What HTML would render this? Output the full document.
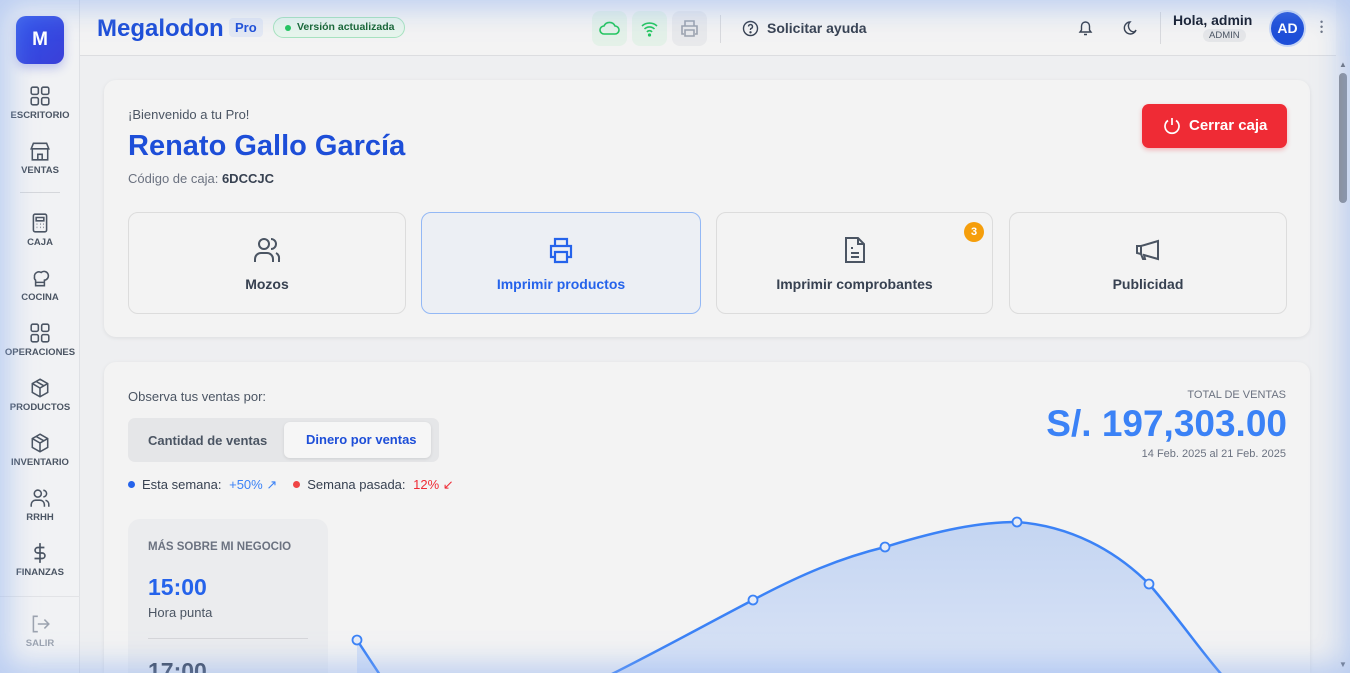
<!DOCTYPE html>
<html><head><meta charset="utf-8">
<style>
*{box-sizing:border-box;margin:0;padding:0}
html,body{width:1350px;height:673px;overflow:hidden}
body{background:#eeeff1;font-family:"Liberation Sans",sans-serif;position:relative;color:#374151}
.glow{position:absolute;left:0;top:0;width:1350px;height:673px;pointer-events:none;box-shadow:inset 0 0 28px 8px rgba(140,175,240,.55);z-index:50}
.side{position:absolute;left:0;top:0;width:80px;height:673px;background:#f1f2f4;border-right:1px solid #dfe1e5}
.logo{position:absolute;left:16px;top:16px;width:48px;height:48px;border-radius:10px;background:linear-gradient(135deg,#2f54eb,#3b3fd8);color:#fff;font-weight:bold;font-size:19px;display:flex;align-items:center;justify-content:center;box-shadow:0 4px 10px rgba(60,80,220,.3)}
.ni{position:absolute;left:0;width:80px;text-align:center;font-size:9.5px;font-weight:bold;color:#4b5563}
.ni svg{display:block;margin:0 auto 3px}
.hdr{position:absolute;left:80px;top:0;width:1256px;height:56px;background:#f3f3f3;border-bottom:1px solid #dcdde0}
.card{position:absolute;background:#f3f3f3;border-radius:12px;box-shadow:0 1px 4px rgba(0,0,0,.08)}
.tile{position:absolute;top:212px;height:102px;border:1px solid #dcdcdc;border-radius:10px;background:#f3f3f3;text-align:center;font-size:14px;font-weight:bold;color:#374151}
.tile svg{position:absolute;left:50%;top:22px;margin-left:-15px}
.tile span{position:absolute;left:0;right:0;top:63px}
</style></head><body>
<div class="side">
 <div class="logo">M</div>
 <div class="ni" style="top:85px"><svg width="22" height="22" viewBox="0 0 20 20" fill="none" stroke="#4b5563" stroke-width="1.4"><rect x="2" y="2" width="6.5" height="6.5" rx="1.5"/><rect x="11.5" y="2" width="6.5" height="6.5" rx="1.5"/><rect x="2" y="11.5" width="6.5" height="6.5" rx="1.5"/><rect x="11.5" y="11.5" width="6.5" height="6.5" rx="1.5"/></svg>ESCRITORIO</div>
 <div class="ni" style="top:140px"><svg width="22" height="22" viewBox="0 0 20 20" fill="none" stroke="#4b5563" stroke-width="1.4"><path d="M3 8V18H17V8M2 8L4 3H16L18 8Z M2 8h16M8 18v-5h4v5"/></svg>VENTAS</div>
 <div style="position:absolute;left:20px;top:192px;width:40px;border-top:1px solid #d5d7db"></div>
 <div class="ni" style="top:212px"><svg width="22" height="22" viewBox="0 0 20 20" fill="none" stroke="#4b5563" stroke-width="1.4"><rect x="4" y="2" width="12" height="16" rx="1.5"/><path d="M6.5 5h7v3h-7zM7 11h.5M10 11h.5M13 11h.5M7 14h.5M10 14h.5M13 14h.5"/></svg>CAJA</div>
 <div class="ni" style="top:267px"><svg width="22" height="22" viewBox="0 0 20 20" fill="none" stroke="#4b5563" stroke-width="1.4"><path d="M6 17h8v-5a4 4 0 1 0-3-7 4 4 0 0 0-6 4 3 3 0 0 0 1 3z M6 14h8"/></svg>COCINA</div>
 <div class="ni" style="top:322px"><svg width="22" height="22" viewBox="0 0 20 20" fill="none" stroke="#4b5563" stroke-width="1.4"><rect x="2" y="2" width="6.5" height="6.5" rx="1.5"/><rect x="11.5" y="2" width="6.5" height="6.5" rx="1.5"/><rect x="2" y="11.5" width="6.5" height="6.5" rx="1.5"/><rect x="11.5" y="11.5" width="6.5" height="6.5" rx="1.5"/></svg>OPERACIONES</div>
 <div class="ni" style="top:377px"><svg width="22" height="22" viewBox="0 0 20 20" fill="none" stroke="#4b5563" stroke-width="1.4"><path d="M10 2l7 4v8l-7 4-7-4V6zM3 6l7 4 7-4M10 10v8M6.5 4l7 4"/></svg>PRODUCTOS</div>
 <div class="ni" style="top:432px"><svg width="22" height="22" viewBox="0 0 20 20" fill="none" stroke="#4b5563" stroke-width="1.4"><path d="M10 2l7 4v8l-7 4-7-4V6zM3 6l7 4 7-4M10 10v8M6.5 4l7 4"/></svg>INVENTARIO</div>
 <div class="ni" style="top:487px"><svg width="22" height="22" viewBox="0 0 20 20" fill="none" stroke="#4b5563" stroke-width="1.4"><circle cx="8" cy="6" r="3.2"/><path d="M2 18v-2a4 4 0 0 1 4-4h4a4 4 0 0 1 4 4v2M13 3a3 3 0 0 1 0 6M15 12a4 4 0 0 1 3 4v2"/></svg>RRHH</div>
 <div class="ni" style="top:542px"><svg width="22" height="22" viewBox="0 0 20 20" fill="none" stroke="#4b5563" stroke-width="1.5"><path d="M10 1v18M14 5H8a2.5 2.5 0 0 0 0 5h4a2.5 2.5 0 0 1 0 5H5"/></svg>FINANZAS</div>
 <div style="position:absolute;left:0;top:596px;width:80px;border-top:1px solid #e2e3e6"></div>
 <div class="ni" style="top:613px;color:#9ca3af"><svg width="22" height="22" viewBox="0 0 20 20" fill="none" stroke="#9ca3af" stroke-width="1.4"><path d="M8 3H4v14h4M8 10h10M14 6l4 4-4 4"/></svg>SALIR</div>
</div>
<div class="hdr">
 <div style="position:absolute;left:17px;top:15px;font-size:24px;font-weight:bold;color:#1d4ed8">Megalodon</div>
 <div style="position:absolute;left:149px;top:18px;background:#e3e8f3;color:#1d4ed8;font-size:13px;font-weight:bold;padding:2px 6px;border-radius:4px">Pro</div>
 <div style="position:absolute;left:193px;top:17px;height:21px;padding:0 10px 0 23px;border:1px solid #a7e3bf;background:#e7f5ec;border-radius:11px;font-size:10.5px;font-weight:bold;color:#166534;line-height:19px">Versión actualizada<span style="position:absolute;left:11px;top:7px;width:6px;height:6px;border-radius:50%;background:#22c55e"></span></div>
 <div style="position:absolute;left:512px;top:11px;width:35px;height:35px;border-radius:8px;background:#e4f1e8"><svg width="35" height="35" viewBox="0 0 35 35" fill="none" stroke="#22c55e" stroke-width="1.6"><path d="M12 23h11a4 4 0 0 0 0-8 6 6 0 0 0-11 0 4 4 0 0 0 0 8z"/></svg></div>
 <div style="position:absolute;left:552px;top:11px;width:35px;height:35px;border-radius:8px;background:#e4f1e8"><svg width="35" height="35" viewBox="0 0 35 35" fill="none" stroke="#22c55e" stroke-width="1.6"><path d="M10 15a11 11 0 0 1 15 0M12.5 18a7 7 0 0 1 10 0M15 21a3 3 0 0 1 5 0"/><circle cx="17.5" cy="24" r=".8" fill="#22c55e"/></svg></div>
 <div style="position:absolute;left:592px;top:11px;width:35px;height:35px;border-radius:8px;background:#e8e9eb"><svg width="35" height="35" viewBox="0 0 35 35" fill="none" stroke="#9ca3af" stroke-width="1.6"><path d="M13 15v-5h9v5M12 23h-2v-8h15v8h-2M13 19h9v6h-9z"/></svg></div>
 <div style="position:absolute;left:640px;top:15px;height:28px;border-left:1px solid #d8d9dc"></div>
 <svg style="position:absolute;left:662px;top:20px" width="17" height="17" viewBox="0 0 17 17" fill="none" stroke="#374151" stroke-width="1.4"><circle cx="8.5" cy="8.5" r="7"/><path d="M6.5 6.5a2 2 0 1 1 2.5 2c-.5.2-.5.6-.5 1.5"/><circle cx="8.5" cy="12.3" r=".5" fill="#374151"/></svg>
 <div style="position:absolute;left:687px;top:20px;font-size:14px;font-weight:bold;color:#374151">Solicitar ayuda</div>
 <svg style="position:absolute;left:997px;top:19px" width="17" height="18" viewBox="0 0 17 18" fill="none" stroke="#374151" stroke-width="1.4"><path d="M3 13h11l-1.5-2V7a4 4 0 0 0-8 0v4zM7 15.5h3"/></svg>
 <svg style="position:absolute;left:1042px;top:19px" width="17" height="18" viewBox="0 0 17 18" fill="none" stroke="#374151" stroke-width="1.4"><path d="M12 13A6 6 0 0 1 8 3a6 6 0 1 0 6 8 5 5 0 0 1-2 2z"/></svg>
 <div style="position:absolute;left:1080px;top:12px;height:32px;border-left:1px solid #d8d9dc"></div>
 <div style="position:absolute;left:1093px;top:12px;font-size:14px;font-weight:bold;color:#111827">Hola, admin</div>
 <div style="position:absolute;left:1123px;top:29px;background:#e5e6e8;border-radius:8px;font-size:9.5px;color:#4b5563;padding:1px 6px">ADMIN</div>
 <div style="position:absolute;left:1191px;top:12px;width:33px;height:33px;border-radius:50%;background:#1d4ed8;color:#fff;font-weight:bold;font-size:14px;text-align:center;line-height:33px;box-shadow:0 0 0 2px #c7d6f5">AD</div>
 <div style="position:absolute;left:1240px;top:20px;width:3px;color:#6b7280;font-size:9px;line-height:5px">•<br>•<br>•</div>
</div>
<div style="position:absolute;left:1336px;top:56px;width:14px;height:617px;background:#f0f0f0"><div style="position:absolute;left:3px;top:17px;width:8px;height:130px;border-radius:4px;background:#8a8a8a"></div><div style="position:absolute;left:3px;top:4px;font-size:8px;color:#666">▲</div><div style="position:absolute;left:3px;bottom:4px;font-size:8px;color:#666">▼</div></div>

<div class="card" style="left:104px;top:80px;width:1206px;height:257px">
 <div style="position:absolute;left:24px;top:27px;font-size:13px;color:#4b5563">¡Bienvenido a tu Pro!</div>
 <div style="position:absolute;left:24px;top:50px;font-size:29px;font-weight:bold;color:#1d4ed8">Renato Gallo García</div>
 <div style="position:absolute;left:24px;top:91px;font-size:13px;color:#6b7280">Código de caja: <b style="color:#374151">6DCCJC</b></div>
 <div style="position:absolute;left:1038px;top:24px;width:145px;height:44px;border-radius:7px;background:#ef2b35;color:#fff;font-size:15px;font-weight:bold;line-height:44px;padding-left:47px;box-shadow:0 2px 5px rgba(239,43,53,.3)"><svg style="position:absolute;left:20px;top:12px" width="20" height="20" viewBox="0 0 20 20" fill="none" stroke="#fff" stroke-width="1.7"><path d="M10 2v7M6 4.5a7 7 0 1 0 8 0"/></svg>Cerrar caja</div>
</div>
<div class="tile" style="left:128px;width:278px"><svg width="30" height="30" viewBox="0 0 30 30" fill="none" stroke="#4b5563" stroke-width="2"><circle cx="12" cy="9" r="5"/><path d="M3 27v-3a6 6 0 0 1 6-6h6a6 6 0 0 1 6 6v3M19 4a5 5 0 0 1 0 10M24 18a6 6 0 0 1 3 6v3"/></svg><span>Mozos</span></div>
<div class="tile" style="left:421px;width:280px;border-color:#93b8f5;background:#eceff4;color:#2563eb;font-weight:bold"><svg width="30" height="30" viewBox="0 0 30 30" fill="none" stroke="#2563eb" stroke-width="2.2"><path d="M9 11V4h12v7M8 22H5V11h20v11h-3M9 17h12v10H9z"/></svg><span>Imprimir productos</span></div>
<div class="tile" style="left:716px;width:277px"><svg width="30" height="30" viewBox="0 0 30 30" fill="none" stroke="#4b5563" stroke-width="2"><path d="M6 3h12l6 6v18H6zM18 3v6h6M11 13h2M11 18h8M11 22h8"/></svg><span>Imprimir comprobantes</span><div style="position:absolute;left:247px;top:9px;width:20px;height:20px;border-radius:50%;background:#f59e0b;color:#fff;font-size:11px;line-height:20px">3</div></div>
<div class="tile" style="left:1009px;width:278px"><svg width="30" height="30" viewBox="0 0 30 30" fill="none" stroke="#4b5563" stroke-width="2"><path d="M4 12v6l4 1 2 5h2l-1-4 14 4V6L8 11H4zM8 11v8"/></svg><span>Publicidad</span></div>

<div class="card" style="left:104px;top:362px;width:1206px;height:311px;overflow:hidden;border-bottom-left-radius:0;border-bottom-right-radius:0">
 <div style="position:absolute;left:24px;top:27px;font-size:13px;color:#4b5563">Observa tus ventas por:</div>
 <div style="position:absolute;left:24px;top:56px;width:311px;height:44px;border-radius:7px;background:#e5e6e8">
  <div style="position:absolute;left:20px;top:15px;font-size:13px;font-weight:bold;color:#4b5563">Cantidad de ventas</div>
  <div style="position:absolute;left:156px;top:4px;width:147px;height:36px;border-radius:6px;background:#f6f6f6;box-shadow:0 1px 3px rgba(0,0,0,.1);font-size:13px;font-weight:bold;color:#1d4ed8;line-height:36px;padding-left:22px">Dinero por ventas</div>
 </div>
 <div style="position:absolute;left:24px;top:115px;font-size:13px;color:#374151;white-space:nowrap"><span style="display:inline-block;width:7px;height:7px;border-radius:50%;background:#2563eb;margin-right:7px;vertical-align:1px"></span>Esta semana: <span style="color:#3b82f6;margin-left:4px">+50% ↗</span><span style="display:inline-block;width:7px;height:7px;border-radius:50%;background:#ef4444;margin:0 7px 0 16px;vertical-align:1px"></span>Semana pasada: <span style="color:#ef2b35;margin-left:4px">12% ↙</span></div>
 <div style="position:absolute;right:24px;top:27px;font-size:11px;color:#6b7280;text-align:right">TOTAL DE VENTAS</div>
 <div style="position:absolute;right:23px;top:41px;font-size:37px;font-weight:bold;color:#3b82f6;text-align:right">S/. 197,303.00</div>
 <div style="position:absolute;right:24px;top:86px;font-size:11px;color:#6b7280;text-align:right">14 Feb. 2025 al 21 Feb. 2025</div>
 <div style="position:absolute;left:24px;top:157px;width:200px;height:154px;overflow:hidden;border-radius:12px 12px 0 0;background:#ebecee">
  <div style="position:absolute;left:20px;top:22px;font-size:11.5px;font-weight:bold;color:#6b7280">MÁS SOBRE MI NEGOCIO</div>
  <div style="position:absolute;left:20px;top:55px;font-size:23px;font-weight:bold;color:#2563eb">15:00</div>
  <div style="position:absolute;left:20px;top:86px;font-size:13px;color:#4b5563">Hora punta</div>
  <div style="position:absolute;left:20px;top:119px;width:160px;border-top:1px solid #d5d6d9"></div>
  <div style="position:absolute;left:20px;top:139px;font-size:23px;font-weight:bold;color:#374151">17:00</div>
 </div>
</div>
<svg style="position:absolute;left:0;top:0" width="1350" height="673" viewBox="0 0 1350 673">
 <defs><linearGradient id="g" x1="0" y1="0" x2="0" y2="1"><stop offset="0" stop-color="#c4d5f2"/><stop offset="1" stop-color="#d9e3f5"/></linearGradient></defs>
 <path d="M357 673 L357 640 L380 673 L612 673 C660 650 705 625 753 600 C800 575 840 558 885 547 C940 530 980 522 1017 522 C1070 526 1115 550 1149 584 C1180 620 1200 650 1220 673 Z" fill="url(#g)"/>
 <path d="M357 640 L380 675 M610 675 C660 650 705 625 753 600 C800 575 840 558 885 547 C940 530 980 522 1017 522 C1070 526 1115 550 1149 584 C1180 620 1200 650 1222 675" fill="none" stroke="#3b82f6" stroke-width="2.5"/>
 <g fill="#e6ecf8" stroke="#3b82f6" stroke-width="1.8"><circle cx="357" cy="640" r="4.5"/><circle cx="753" cy="600" r="4.5"/><circle cx="885" cy="547" r="4.5"/><circle cx="1017" cy="522" r="4.5"/><circle cx="1149" cy="584" r="4.5"/></g>
</svg>
<div class="glow"></div>
</body></html>
